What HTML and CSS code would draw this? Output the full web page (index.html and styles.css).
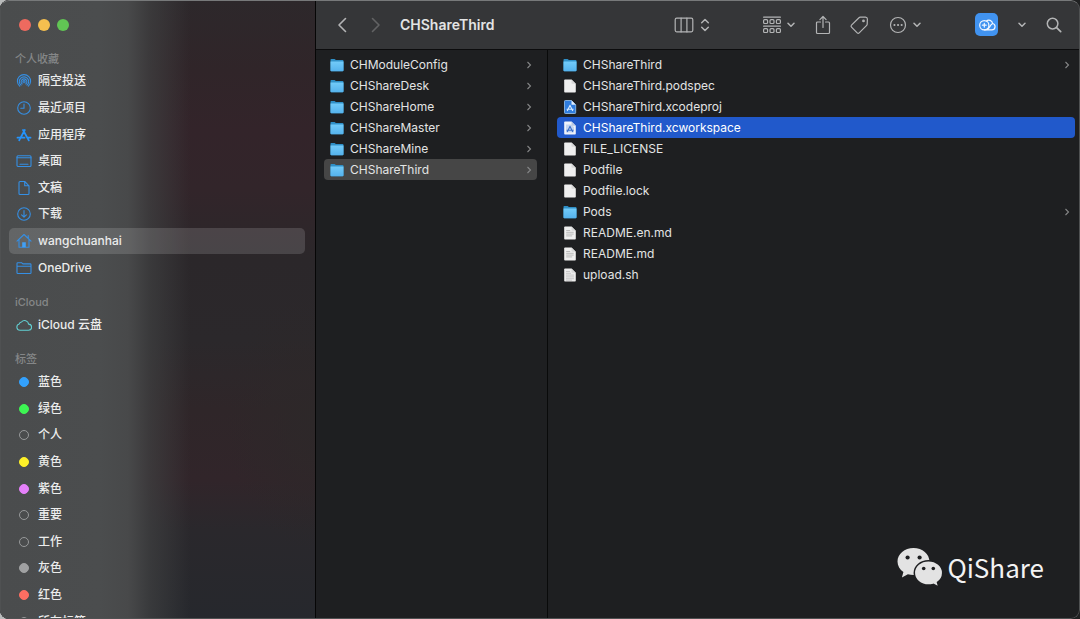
FILE: index.html
```html
<!DOCTYPE html>
<html lang="zh-CN">
<head>
<meta charset="utf-8">
<meta name="viewport" content="width=device-width, initial-scale=1">
<title>CHShareThird</title>
<link rel="stylesheet" href="styles.css">
</head>
<body>
<svg class="sprite" aria-hidden="true">
  <defs>
    <linearGradient id="folder-fill" x1="0" y1="0" x2="0" y2="1">
      <stop offset="0" stop-color="#72cbf9"/><stop offset="1" stop-color="#55b2ec"/>
    </linearGradient>
    <symbol id="folder" viewBox="0 0 14 14">
      <path d="M.5 1.800q0-.9.9-.9h3.200l1.300 1.200h6.700q.9 0 .9.9v9.300q0 .9-.9.9H1.400q-.9 0-.9-.9z" fill="#2f8fc6"/>
      <path d="M.5 3.600h13v8.700q0 .9-.9.9H1.400q-.9 0-.9-.9z" fill="url(#folder-fill)"/>
    </symbol>
    <symbol id="file" viewBox="0 0 14 14">
      <path d="M1.200 1.300q0-.8.8-.8h6.500l4.300 4.300v7.900q0 .8-.8.8H2q-.8 0-.8-.8z" fill="#efefef"/>
      <path d="M8.500.5l4.300 4.300H9.300q-.8 0-.8-.8z" fill="#d8d8d8"/>
    </symbol>
    <symbol id="file-text" viewBox="0 0 14 14">
      <path d="M1.200 1.300q0-.8.8-.8h6.500l4.300 4.300v7.900q0 .8-.8.8H2q-.8 0-.8-.8z" fill="#efefef"/>
      <path d="M8.500.5l4.300 4.300H9.300q-.8 0-.8-.8z" fill="#d8d8d8"/>
      <path d="M3.200 4.500h4M3.200 6.300h7.500M3.200 8.100h7.500M3.200 9.900h6" stroke="#b4b4b4" stroke-width=".9"/>
    </symbol>
    <symbol id="file-script" viewBox="0 0 14 14">
      <path d="M1.200 1.300q0-.8.8-.8h6.500l4.300 4.300v7.900q0 .8-.8.8H2q-.8 0-.8-.8z" fill="#ececec"/>
      <path d="M8.500.5l4.300 4.300H9.300q-.8 0-.8-.8z" fill="#d8d8d8"/>
      <path d="M3 3.500h4M3 5.300h5M3 7.100h8M3 8.900h8M3 10.700h8M3 12.200h6" stroke="#c4c4c4" stroke-width=".9"/>
    </symbol>
    <symbol id="xcodeproj" viewBox="0 0 14 14">
      <path d="M1.500 1.300q0-.8.8-.8h6.200l4.200 4.200v8q0 .8-.8.8H2.300q-.8 0-.8-.8z" fill="#2f7ddf" stroke="#9cc8f4" stroke-width=".8"/>
      <path d="M8.500.5l4.200 4.200H8.500z" fill="#e4eefa"/>
      <path d="M4.200 11l3-6M6.800 5l3 6M3.600 9.200h7" fill="none" stroke="#d8ebff" stroke-width="1.100"/>
    </symbol>
    <symbol id="xcworkspace" viewBox="0 0 14 14">
      <path d="M1.200 1.300q0-.8.8-.8h6.500l4.300 4.300v7.900q0 .8-.8.8H2q-.8 0-.8-.8z" fill="#f0f3fa"/>
      <path d="M3 3.500h5l3 2.500v5.500H3z" fill="#c5d5f0"/>
      <path d="M4.200 11l3-6M6.800 5l3 6M3.600 9.200h7" fill="none" stroke="#3c6fc9" stroke-width="1.100"/>
      <path d="M8.500.5l4.300 4.300H8.500z" fill="#b9c7e2"/>
    </symbol>
    <symbol id="arrow" viewBox="0 0 6 8"><path d="M1.500 1l3 3-3 3" fill="none" stroke="currentColor" stroke-width="1.100"/></symbol>
    <symbol id="chevron" viewBox="0 0 8 6"><path d="M1 1.200l3 3 3-3" fill="none" stroke="currentColor" stroke-width="1.500" stroke-linecap="round" stroke-linejoin="round"/></symbol>
  </defs>
</svg>
<div class="window">
  <aside class="sidebar">
    <div class="lights">
      <button class="light close" aria-label="关闭"></button>
      <button class="light minimize" aria-label="最小化"></button>
      <button class="light zoom" aria-label="缩放"></button>
    </div>
    <nav class="places">
      <h2 class="heading">个人收藏</h2>
      <ul class="list favorites">
        <li><a class="place" href="#airdrop"><svg class="glyph" viewBox="0 0 16 16"><path d="M3.700 13.200A6.600 6.600 0 1 1 12.300 13.200M5 12.200A4.700 4.700 0 1 1 11 12.200M6.200 11A2.900 2.900 0 1 1 9.800 11M7.300 9.600A1.100 1.100 0 1 1 8.700 9.600"/></svg>隔空投送</a></li>
        <li><a class="place" href="#recents"><svg class="glyph" viewBox="0 0 16 16"><circle cx="8" cy="8" r="6.300"/><path d="M8 4v4.300H4.800"/></svg>最近项目</a></li>
        <li><a class="place" href="#apps"><svg class="glyph bold" viewBox="0 0 16 16"><path d="M4.300 11.200L8.800 3M7 3l5.800 10.400M1.500 10.700h7M11.300 10.700h3.200M3.200 13.300l.5-.9"/></svg>应用程序</a></li>
        <li><a class="place" href="#desktop"><svg class="glyph" viewBox="0 0 16 16"><rect x="1" y="2.700" width="14" height="10.800" rx="1"/><path d="M1 4.700h14M4 11.200h8"/></svg>桌面</a></li>
        <li><a class="place" href="#documents"><svg class="glyph" viewBox="0 0 16 16"><path d="M3 2.500q0-1 1-1h4.700L13 5.800v7.700q0 1-1 1H4q-1 0-1-1zM8.700 1.500v4.300H13"/></svg>文稿</a></li>
        <li><a class="place" href="#downloads"><svg class="glyph" viewBox="0 0 16 16"><circle cx="8" cy="8" r="6.300"/><path d="M8 4.500v6.500M5.600 8.800L8 11.200l2.400-2.400"/></svg>下载</a></li>
        <li><a class="place current" aria-current="page" href="#home"><svg class="glyph" viewBox="0 0 16 16"><path d="M1 8.200l7-6.700 7 6.700M3 6.700v7.600h10V6.700M12.200 5V2.500"/><path class="solid" d="M6.200 14.300V9.300h3.600v5z"/></svg>wangchuanhai</a></li>
        <li><a class="place" href="#onedrive"><svg class="glyph" viewBox="0 0 16 16"><path d="M1 3.500q0-.8.8-.8h3.700l1.300 1.200h7.400q.8 0 .8.800v8q0 .8-.8.8H1.800q-.8 0-.8-.8zM1 6.300h14"/></svg>OneDrive</a></li>
      </ul>
      <h2 class="heading">iCloud</h2>
      <ul class="list cloud">
        <li><a class="place" href="#icloud"><svg class="glyph teal" viewBox="0 0 16 16"><path d="M4 13.300a3.200 3.200 0 0 1-.7-6.300A2.300 2.300 0 0 1 5.500 5 4 4 0 0 1 12.600 7.100a3.100 3.100 0 0 1-.2 6.200z"/></svg>iCloud 云盘</a></li>
      </ul>
      <h2 class="heading">标签</h2>
      <ul class="list tags">
        <li><a class="place" href="#blue"><i class="dot blue"></i>蓝色</a></li>
        <li><a class="place" href="#green"><i class="dot green"></i>绿色</a></li>
        <li><a class="place" href="#personal"><i class="dot"></i>个人</a></li>
        <li><a class="place" href="#yellow"><i class="dot yellow"></i>黄色</a></li>
        <li><a class="place" href="#purple"><i class="dot purple"></i>紫色</a></li>
        <li><a class="place" href="#important"><i class="dot"></i>重要</a></li>
        <li><a class="place" href="#work"><i class="dot"></i>工作</a></li>
        <li><a class="place" href="#gray"><i class="dot gray"></i>灰色</a></li>
        <li><a class="place" href="#red"><i class="dot red"></i>红色</a></li>
        <li><a class="place" href="#all"><i class="dot"></i>所有标签</a></li>
      </ul>
    </nav>
  </aside>
  <main class="main">
    <header class="toolbar">
      <div class="history">
        <button class="tool" aria-label="后退"><svg width="10" height="16" viewBox="0 0 10 16"><path d="M8.500 1.500L2 8l6.500 6.500" stroke-width="1.600"/></svg></button>
        <button class="tool" aria-label="前进" disabled><svg width="10" height="16" viewBox="0 0 10 16"><path d="M1.500 1.500L8 8l-6.500 6.500" stroke-width="1.600"/></svg></button>
      </div>
      <h1 class="title">CHShareThird</h1>
      <div class="tools">
        <button class="tool view" aria-label="显示方式"><svg width="20" height="16" viewBox="0 0 20 16"><rect x="1.200" y="1.200" width="17.600" height="13.600" rx="1.500"/><path d="M7.100 1v14M12.900 1v14"/></svg><svg width="10" height="14" viewBox="0 0 10 14"><path d="M1.700 4.800L5 1.500l3.300 3.300M1.700 9.200L5 12.500l3.300-3.300" stroke-width="1.500"/></svg></button>
        <button class="tool" aria-label="分组"><svg width="18" height="18" viewBox="0 0 18 18"><path d="M.6 1.200h16.800M.6 10.200h16.800"/><g><rect x=".6" y="3.700" width="4" height="3.800" rx="1"/><rect x="7" y="3.700" width="4" height="3.800" rx="1"/><rect x="13.400" y="3.700" width="4" height="3.800" rx="1"/><rect x=".6" y="12.700" width="4" height="3.800" rx="1"/><rect x="7" y="12.700" width="4" height="3.800" rx="1"/><rect x="13.400" y="12.700" width="4" height="3.800" rx="1"/></g></svg><svg width="8" height="6"><use href="#chevron"/></svg></button>
        <button class="tool share" aria-label="共享"><svg width="16" height="20" viewBox="0 0 16 20"><path d="M5.500 7H2.500q-1 0-1 1v9.500q0 1 1 1h11q1 0 1-1V8q0-1-1-1h-3M8 12.500V1.700M4.900 4.600L8 1.500l3.100 3.100"/></svg></button>
        <button class="tool" aria-label="标签"><svg width="20" height="20" viewBox="0 0 20 20"><path d="M11.200 2.200l5.300-.1q1.800.1 1.900 1.900l-.2 5.100q0 .7-.5 1.200l-7.500 7.500q-1 1-2 0l-5.700-5.700q-1-1 0-2L10 2.700q.5-.5 1.200-.5z"/><circle cx="14.500" cy="5.900" r=".8"/></svg></button>
        <button class="tool more" aria-label="更多"><svg width="18" height="18" viewBox="0 0 18 18"><circle cx="9" cy="9" r="7.500"/><path d="M5.400 9h.1M9 9h.1M12.600 9h.1" stroke-width="2"/></svg><svg width="8" height="6"><use href="#chevron"/></svg></button>
        <button class="tool sync" aria-label="网盘"><svg width="18" height="14" viewBox="0 0 18 14"><circle cx="6.300" cy="7.200" r="4.600"/><path d="M6.300 5.300v3.800M4.400 7.200h3.800M6.300 11.800h7.400a3.200 3.200 0 0 0 .9-6.300A3.800 3.800 0 0 0 8.300 3.100M8.500 11.600q2-.5 3.300-3 1-2 2.800-3.100"/></svg></button>
        <button class="tool expand" aria-label="展开"><svg width="8" height="6"><use href="#chevron"/></svg></button>
        <button class="tool" aria-label="搜索"><svg width="16" height="16" viewBox="0 0 16 16"><circle cx="6.600" cy="6.600" r="5.300" stroke-width="1.500"/><path d="M10.600 10.600l4.100 4.100" stroke-width="1.700"/></svg></button>
      </div>
    </header>
    <div class="columns">
      <ul class="column parent">
        <li><button class="row"><svg class="icon"><use href="#folder"/></svg><span class="name">CHModuleConfig</span><svg class="arrow"><use href="#arrow"/></svg></button></li>
        <li><button class="row"><svg class="icon"><use href="#folder"/></svg><span class="name">CHShareDesk</span><svg class="arrow"><use href="#arrow"/></svg></button></li>
        <li><button class="row"><svg class="icon"><use href="#folder"/></svg><span class="name">CHShareHome</span><svg class="arrow"><use href="#arrow"/></svg></button></li>
        <li><button class="row"><svg class="icon"><use href="#folder"/></svg><span class="name">CHShareMaster</span><svg class="arrow"><use href="#arrow"/></svg></button></li>
        <li><button class="row"><svg class="icon"><use href="#folder"/></svg><span class="name">CHShareMine</span><svg class="arrow"><use href="#arrow"/></svg></button></li>
        <li><button class="row opened"><svg class="icon"><use href="#folder"/></svg><span class="name">CHShareThird</span><svg class="arrow"><use href="#arrow"/></svg></button></li>
      </ul>
      <ul class="column files">
        <li><button class="row"><svg class="icon"><use href="#folder"/></svg><span class="name">CHShareThird</span><svg class="arrow"><use href="#arrow"/></svg></button></li>
        <li><button class="row"><svg class="icon"><use href="#file"/></svg><span class="name">CHShareThird.podspec</span></button></li>
        <li><button class="row"><svg class="icon"><use href="#xcodeproj"/></svg><span class="name">CHShareThird.xcodeproj</span></button></li>
        <li><button class="row selected"><svg class="icon"><use href="#xcworkspace"/></svg><span class="name">CHShareThird.xcworkspace</span></button></li>
        <li><button class="row"><svg class="icon"><use href="#file"/></svg><span class="name">FILE_LICENSE</span></button></li>
        <li><button class="row"><svg class="icon"><use href="#file"/></svg><span class="name">Podfile</span></button></li>
        <li><button class="row"><svg class="icon"><use href="#file"/></svg><span class="name">Podfile.lock</span></button></li>
        <li><button class="row"><svg class="icon"><use href="#folder"/></svg><span class="name">Pods</span><svg class="arrow"><use href="#arrow"/></svg></button></li>
        <li><button class="row"><svg class="icon"><use href="#file-text"/></svg><span class="name">README.en.md</span></button></li>
        <li><button class="row"><svg class="icon"><use href="#file-text"/></svg><span class="name">README.md</span></button></li>
        <li><button class="row"><svg class="icon"><use href="#file-script"/></svg><span class="name">upload.sh</span></button></li>
      </ul>
    </div>
  </main>
  <div class="watermark">
    <svg width="46" height="40" viewBox="0 0 46 40">
      <path d="M16.500 1C7.600 1 .5 7 .5 14.600c0 4.300 2.300 8 5.900 10.500L4.900 30.500l6-3.300c1.800.5 3.700.8 5.600.8 8.900 0 16-6 16-13.400S25.400 1 16.500 1z"/>
      <path class="front" d="M31.500 13.700c-7.900 0-14.200 5.400-14.200 12.200s6.300 12.200 14.200 12.200c1.700 0 3.400-.3 4.900-.7l5.400 2.700-1.300-4.700c3-2.200 5.200-5.600 5.200-9.500 0-6.800-6.300-12.200-14.200-12.200z"/>
      <g class="eyes"><circle cx="10.600" cy="10.500" r="2.100"/><circle cx="22.600" cy="10.500" r="2.100"/><circle cx="26.700" cy="21.500" r="1.800"/><circle cx="36.300" cy="21.500" r="1.800"/></g>
    </svg>
    <span>QiShare</span>
  </div>
</div>
</body>
</html>
```
FILE: styles.css
```css
* { box-sizing: border-box; }
body {
  margin: 0;
  background: linear-gradient(90deg, #b9bbbb 0 50%, #202122 50%);
  color: #e3e4e4;
  font: 12px/16px Inter, "Noto Sans CJK SC", sans-serif;
}
button { padding: 0; border: 0; background: none; color: inherit; font: inherit; }
ul { margin: 0; padding: 0; list-style: none; }
h1, h2 { margin: 0; }
.sprite { position: absolute; width: 0; height: 0; }

.window {
  position: relative;
  display: flex;
  height: 100vh;
  overflow: hidden;
  border-radius: 9px;
  background: #1e1f21;
}
.window::after {
  content: "";
  position: absolute;
  inset: 0;
  border: 1px solid #4f5152;
  border-top-color: #77797a;
  border-radius: 9px;
  pointer-events: none;
}

.sidebar {
  flex: none;
  width: 316px;
  overflow: hidden;
  padding: 19px 10px 0 9px;
  border-right: 1px solid #060606;
  background:
    linear-gradient(90deg, #4a4c4d 0, #4b4d4e 100px, #48494a 128px, rgba(64, 65, 66, .7) 150px, rgba(45, 43, 45, 0) 190px),
    radial-gradient(ellipse 90px 130px at 316px 420px, #2d2829, rgba(45, 40, 41, 0)),
    linear-gradient(180deg, #2d282b 0, #302529 70px, #33242a 130px, #32252a 190px, #2b272a 260px, #2b282b 340px, #2f2629 410px, #31252a 480px, #2a282c 530px, #26282d 100%);
}
.lights { display: flex; gap: 7px; padding-left: 10px; }
.light { width: 12px; height: 12px; border-radius: 50%; }
.close { background: #ee6a5f; }
.minimize { background: #f5bf4f; }
.zoom { background: #61c554; }
.places { margin-top: 20px; }
.heading {
  padding: 0 6px;
  color: #858788;
  font-size: 11px;
  font-weight: 500;
  line-height: 16px;
}
.list { display: grid; grid-auto-rows: 1fr; }
.favorites { height: 213px; margin: 1px 0 13px; }
.cloud { height: 27px; margin: 1px 0 13px; }
.tags { height: 266px; margin-top: 2px; }
.place {
  display: flex;
  align-items: center;
  gap: 6px;
  height: 100%;
  padding-left: 7px;
  border-radius: 5px;
  color: #ebecec;
  font-weight: 500;
  text-decoration: none;
}
.current { background: rgba(255, 255, 255, .14); }
.glyph {
  width: 16px;
  height: 16px;
  fill: none;
  stroke: #358fe4;
  stroke-width: 1.1;
  stroke-linecap: round;
  stroke-linejoin: round;
}
.glyph .solid { fill: #41a0f5; stroke: none; }
.bold { stroke: #2593fa; stroke-width: 1.8; }
.teal { stroke: #62cfd2; }
.dot {
  width: 10px;
  height: 10px;
  margin: 0 3px;
  border: 1px solid #97999a;
  border-radius: 50%;
}
.blue { background: #33a1fd; border-color: #33a1fd; }
.green { background: #3df553; border-color: #3df553; }
.yellow { background: #fdf028; border-color: #fdf028; }
.purple { background: #e580fa; border-color: #e580fa; }
.gray { background: #a0a1a2; border-color: #a0a1a2; }
.red { background: #fc6e62; border-color: #fc6e62; }

.main { display: flex; flex: 1; flex-direction: column; min-width: 0; }
.toolbar {
  display: flex;
  flex: none;
  align-items: center;
  height: 50px;
  padding: 0 18px 0 21px;
  border-bottom: 1px solid #0c0c0d;
  background: #353638;
}
.history { display: flex; gap: 24px; }
.title { margin-left: 19px; font-size: 14px; font-weight: 600; line-height: 20px; }
.tools { display: flex; align-items: center; margin-left: auto; }
.tool { display: flex; align-items: center; gap: 6px; color: #b3b4b5; }
.tool:disabled { color: #626364; }
.tool svg {
  fill: none;
  stroke: currentColor;
  stroke-width: 1.2;
  stroke-linecap: round;
  stroke-linejoin: round;
}
.view { margin-right: 53px; }
.share { margin: 0 18px 0 20px; }
.more { margin-left: 20px; }
.sync {
  justify-content: center;
  width: 23px;
  height: 23px;
  margin-left: 54px;
  border-radius: 5px;
  background: #4193f0;
  color: #f3f8ff;
}
.expand { margin: 0 20px; }

.columns { display: flex; flex: 1; min-height: 0; }
.column { padding-top: 4px; }
.parent {
  flex: none;
  width: 232px;
  padding-right: 10px;
  padding-left: 8px;
  border-right: 1px solid #090a0a;
}
.files { flex: 1; padding-right: 5px; padding-left: 9px; }
.row {
  display: flex;
  align-items: center;
  gap: 6px;
  width: 100%;
  height: 21px;
  padding: 0 5px 0 6px;
  border-radius: 4px;
  text-align: left;
}
.icon { width: 14px; height: 14px; }
.name { flex: 1; }
.arrow { width: 6px; height: 8px; color: #858687; }
.opened { background: #464646; }
.selected { background: #2159cb; color: #fff; }

.watermark {
  position: absolute;
  right: 36px;
  bottom: 32px;
  display: flex;
  align-items: center;
  gap: 4px;
  color: #f3f3f3;
  font: 26px/40px "Noto Sans CJK SC", sans-serif;
}
.watermark svg { fill: #e3e3e3; }
.watermark .front { stroke: #1e1f21; stroke-width: 1.5; }
.watermark .eyes { fill: #1e1f21; }
```
